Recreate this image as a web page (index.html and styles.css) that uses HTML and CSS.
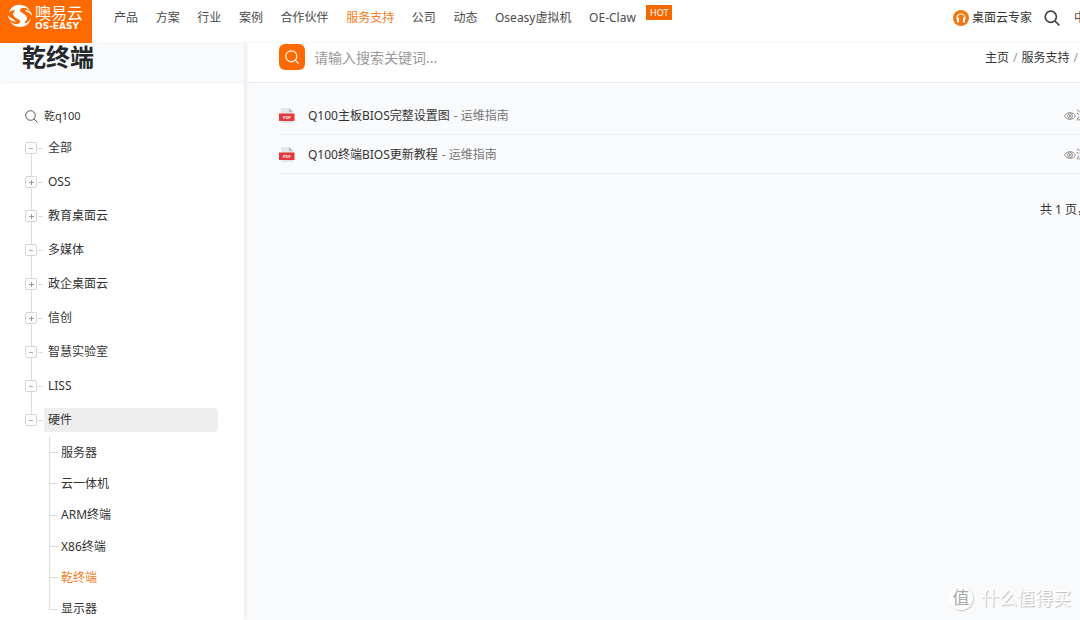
FILE: index.html
```html
<!DOCTYPE html>
<html lang="zh-CN">
<head>
<meta charset="utf-8">
<title>乾终端 - 噢易云</title>
<link rel="stylesheet" href="styles.css">
</head>
<body>
<header class="topbar">
  <a class="logo" href="#">
    <svg class="logo-mark" viewBox="0 0 24 24" aria-hidden="true">
      <g fill="#fff">
        <path d="M1 9C2 3 8 0 13 1c4 .5 7 2 9 6-4-4-9-4-10-1-1 3 8 4 7 9-.5 2-2 3-4 4 2-4-1-5-4-6-4-1-6-4-4-7C4 6 2 7 1 9z"/>
        <path d="M23 14c-1 6-6 9-11 9-5-.5-8-2-10-6 4 4 9 4 10 1 .5-1.500-1-2.500-3-3.500-3-1.500-5-3.500-3.500-7C6 11 9 11 12 12.500c4 1.500 6 3.500 4.500 7 3-.5 5-2.500 6.500-5.500z"/>
        <path d="M0 11c2 4 6 3 8 7-4-1-8-2-8-7zM24 12c-2-4-5-3-7-6 4 0 7 2 7 6z"/>
      </g>
    </svg>
    <span class="logo-text"><span class="logo-cn">噢易云</span><span class="logo-en">OS-EASY</span></span>
  </a>
  <nav class="mainnav">
    <a href="#">产品</a><a href="#">方案</a><a href="#">行业</a><a href="#">案例</a><a href="#">合作伙伴</a><a class="active" href="#">服务支持</a><a href="#">公司</a><a href="#">动态</a><a href="#">Oseasy虚拟机</a><a href="#">OE-Claw</a>
  </nav>
  <span class="hot">HOT</span>
  <div class="tools">
    <a class="expert" href="#">
      <svg width="16" height="16" viewBox="0 0 16 16" aria-hidden="true"><circle cx="8" cy="8" r="8" fill="#f07814"/><path d="M4 9V8a4 4 0 0 1 8 0v1" fill="none" stroke="#fff" stroke-width="1.200"/><path d="M5 8.500v3M11 8.500v3" stroke="#fff" stroke-width="2" stroke-linecap="round"/></svg>
      桌面云专家</a>
    <button class="icon-btn" type="button" aria-label="搜索">
      <svg width="16" height="16" viewBox="0 0 16 16" fill="none" stroke="#444" stroke-width="1.700"><circle cx="6.800" cy="6.800" r="5.600"/><path d="M11 11l4.300 4.300"/></svg>
    </button>
    <a class="lang" href="#">中文</a>
  </div>
</header>
<div class="layout">
  <aside class="sidebar">
    <h1 class="title">乾终端</h1>
    <div class="panel">
      <label class="filter">
        <svg width="13" height="13" viewBox="0 0 13 13" fill="none" stroke="#555"><circle cx="5.500" cy="5.500" r="4.800"/><path d="M9 9l3.700 3.500"/></svg>
        <input type="text" value="乾q100" aria-label="筛选分类">
      </label>
      <ul class="tree">
        <li><button type="button" class="toggle" aria-label="收起"></button><a href="#">全部</a></li>
        <li><button type="button" class="toggle plus" aria-label="展开"></button><a href="#">OSS</a></li>
        <li><button type="button" class="toggle plus" aria-label="展开"></button><a href="#">教育桌面云</a></li>
        <li><button type="button" class="toggle" aria-label="收起"></button><a href="#">多媒体</a></li>
        <li><button type="button" class="toggle plus" aria-label="展开"></button><a href="#">政企桌面云</a></li>
        <li><button type="button" class="toggle plus" aria-label="展开"></button><a href="#">信创</a></li>
        <li><button type="button" class="toggle" aria-label="收起"></button><a href="#">智慧实验室</a></li>
        <li><button type="button" class="toggle" aria-label="收起"></button><a href="#">LISS</a></li>
        <li><button type="button" class="toggle" aria-label="收起"></button><a class="current" href="#">硬件</a></li>
      </ul>
      <ul class="subtree">
        <li><a href="#">服务器</a></li>
        <li><a href="#">云一体机</a></li>
        <li><a href="#">ARM终端</a></li>
        <li><a href="#">X86终端</a></li>
        <li><a class="active" href="#">乾终端</a></li>
        <li><a href="#">显示器</a></li>
      </ul>
    </div>
  </aside>
  <main class="content">
    <div class="searchbar">
      <button class="search-btn" type="button" aria-label="搜索">
        <svg width="14" height="14" viewBox="0 0 14 14" fill="none" stroke="#fff" stroke-width="1.200" stroke-linecap="round"><circle cx="6.300" cy="6.300" r="5.500"/><path d="M10.300 10.300l3 3"/></svg>
      </button>
      <input class="keyword" type="text" placeholder="请输入搜索关键词..." aria-label="搜索关键词">
      <nav class="crumbs"><a href="#">主页</a><span>/</span><a href="#">服务支持</a><span>/</span></nav>
    </div>
    <ul class="docs">
      <li>
        <svg class="pdf" width="16" height="16" viewBox="0 0 16 16" aria-hidden="true"><path d="M2 0h8l4 4v11H2z" fill="#e4e6e8"/><path d="M10 0l4 4h-4z" fill="#b5b9bd"/><path d="M0 5.500h15.500v7.500H0z" fill="#e8383b"/><text x="8" y="11" text-anchor="middle" class="pdf-label">PDF</text></svg>
        <a href="#">Q100主板BIOS完整设置图</a><span class="cat">- 运维指南</span>
        <span class="views"><svg width="12" height="10" viewBox="0 0 12 10" fill="none" stroke="#777" stroke-width=".8"><path d="M.5 5C3 .5 9 .5 11.500 5 9 9.500 3 9.500.5 5z"/><circle cx="6" cy="5" r="2.400"/><circle cx="6" cy="5" r=".8"/></svg>浏览</span>
      </li>
      <li>
        <svg class="pdf" width="16" height="16" viewBox="0 0 16 16" aria-hidden="true"><path d="M2 0h8l4 4v11H2z" fill="#e4e6e8"/><path d="M10 0l4 4h-4z" fill="#b5b9bd"/><path d="M0 5.500h15.500v7.500H0z" fill="#e8383b"/><text x="8" y="11" text-anchor="middle" class="pdf-label">PDF</text></svg>
        <a href="#">Q100终端BIOS更新教程</a><span class="cat">- 运维指南</span>
        <span class="views"><svg width="12" height="10" viewBox="0 0 12 10" fill="none" stroke="#777" stroke-width=".8"><path d="M.5 5C3 .5 9 .5 11.500 5 9 9.500 3 9.500.5 5z"/><circle cx="6" cy="5" r="2.400"/><circle cx="6" cy="5" r=".8"/></svg>浏览</span>
      </li>
    </ul>
    <p class="pager"><span>共 1 页，</span></p>
  </main>
</div>
<div class="watermark"><span class="seal">值</span><span>什么值得买</span></div>
</body>
</html>
```
FILE: styles.css
```css
* { box-sizing: border-box; }
body {
  margin: 0;
  height: 100vh;
  overflow: hidden;
  display: flex;
  flex-direction: column;
  background: #f9fafc;
  color: #333;
  font: 12px/18px "Noto Sans", "Noto Sans CJK SC", sans-serif;
  white-space: nowrap;
}
a { color: inherit; text-decoration: none; }
ul { list-style: none; margin: 0; padding: 0; }
button { padding: 0; border: 0; background: none; }
input { border: 0; outline: 0; padding: 0; background: none; font: inherit; color: inherit; }
svg { flex: none; display: block; }

.topbar { position: relative; z-index: 1; display: flex; flex: none; height: 43px; background: #fff; color: #4a4a4a; border-bottom: 1px solid #f7f7f7; }
.logo { display: flex; gap: 3px; flex: none; width: 92px; height: 43px; padding: 4px 0 0 8px; background: #ff6a00; color: #fff; }
.logo-mark { width: 24px; height: 24px; }
.logo-text { display: flex; flex-direction: column; }
.logo-cn { font-size: 16px; line-height: 18px; }
.logo-en { font: bold 9px/9px "DejaVu Sans", sans-serif; }
.mainnav { display: flex; justify-content: space-between; flex: none; width: 522px; margin-left: 22px; line-height: 36px; }
.active { color: #f47b20; }
.hot { flex: none; height: 15px; margin: 5px 0 0 10px; padding: 0 4px; background: #f56a00; color: #fff; font-size: 9px; line-height: 15px; }
.tools { display: flex; align-items: center; gap: 12px; flex: none; width: 127px; height: 35px; margin-left: auto; }
.expert { display: flex; align-items: center; gap: 3px; color: #333; }
.lang { margin-left: 2px; }

.layout { display: flex; flex: 1; min-height: 0; }
.sidebar { flex: none; width: 244px; display: flex; flex-direction: column; box-shadow: 0 0 6px #dfe2e6; }
.title { flex: none; margin: 0; height: 39px; padding-left: 22px; background: #f8fafc; color: #24282c; font-size: 24px; line-height: 28px; }
.panel { flex: 1; min-height: 0; padding: 24px 26px 0 25px; background: #fff; border-top: 1px solid #f0f2f4; border-radius: 6px 6px 0 0; }
.filter { display: flex; align-items: center; gap: 6px; height: 18px; margin-bottom: 6px; }
.filter input { width: 150px; font-size: 11px; }
.tree li { display: flex; align-items: center; height: 34px; background: linear-gradient(#ddd, #ddd) 6px 0 / 1px 100% no-repeat; }
.tree li:first-child { background-position: 6px 17px; }
.tree li:last-child { background-size: 1px 50%; }
.toggle {
  flex: none; width: 12px; height: 12px; margin-right: 7px;
  border: 1px solid #d5d5d5; border-radius: 2px;
  background: linear-gradient(#aaa, #aaa) center / 4px 1px no-repeat #fff;
}
.toggle.plus { background: linear-gradient(#999, #999) center / 5px 1px no-repeat, linear-gradient(#999, #999) center / 1px 5px no-repeat #fff; }
.tree a { flex: 1; margin-left: -7px; padding-left: 11px; line-height: 24px; background: linear-gradient(#ddd, #ddd) 1px 12px / 5px 1px no-repeat; }
.tree .current { background: linear-gradient(#ddd, #ddd) 1px 12px / 5px 1px no-repeat, linear-gradient(#eee, #eee) 7px 0 / 100% 100% no-repeat; border-radius: 4px; }
.subtree { display: flex; flex-direction: column; height: 188px; margin-left: 24px; }
.subtree li { flex: 1; display: flex; align-items: center; gap: 3px; background: linear-gradient(#ddd, #ddd) 0 0 / 1px 100% no-repeat; }
.subtree li:last-child { background-size: 1px 50%; }
.subtree li::before { content: ""; width: 9px; height: 1px; background: #ddd; }

.content { flex: 1; min-width: 0; overflow: hidden; margin-left: 4px; }
.searchbar { display: flex; gap: 9px; height: 40px; padding-left: 31px; background: #fff; border-bottom: 1px solid #e9ecf0; }
.search-btn { display: flex; align-items: center; justify-content: center; flex: none; width: 26px; height: 26px; margin-top: 1px; border-radius: 6px; background: #ff6a00; }
.keyword { flex: 1; min-width: 0; height: 28px; font-size: 14px; }
.keyword::placeholder { color: #999; opacity: 1; }
.crumbs { display: flex; gap: 4px; flex: none; width: 95px; line-height: 30px; }
.crumbs span { color: #999; }
.docs { padding: 13px 0 0 31px; }
.docs li { display: flex; align-items: center; height: 39px; padding-top: 2px; border-bottom: 1px solid #ebedf0; }
.docs a { margin-left: 13px; }
.cat { margin-left: 4px; color: #777; }
.views { display: flex; align-items: center; width: 16px; margin-left: auto; color: #777; }
.pdf-label { font: bold 4px "Liberation Sans", sans-serif; fill: #fff; }
.pager { display: flex; justify-content: flex-end; margin: 27px 0 0; }
.pager span { width: 40px; }

.watermark { position: absolute; right: 9px; bottom: 9px; display: flex; align-items: center; gap: 8px; color: #fff; font-size: 18px; line-height: 26px; text-shadow: 1px 1px 1px #bbb; }
.seal { width: 24px; height: 24px; border-radius: 50%; background: #fff; box-shadow: 1px 1px 1px #ccc; color: #aaa; font-size: 17px; line-height: 23px; text-align: center; text-shadow: none; }
```
